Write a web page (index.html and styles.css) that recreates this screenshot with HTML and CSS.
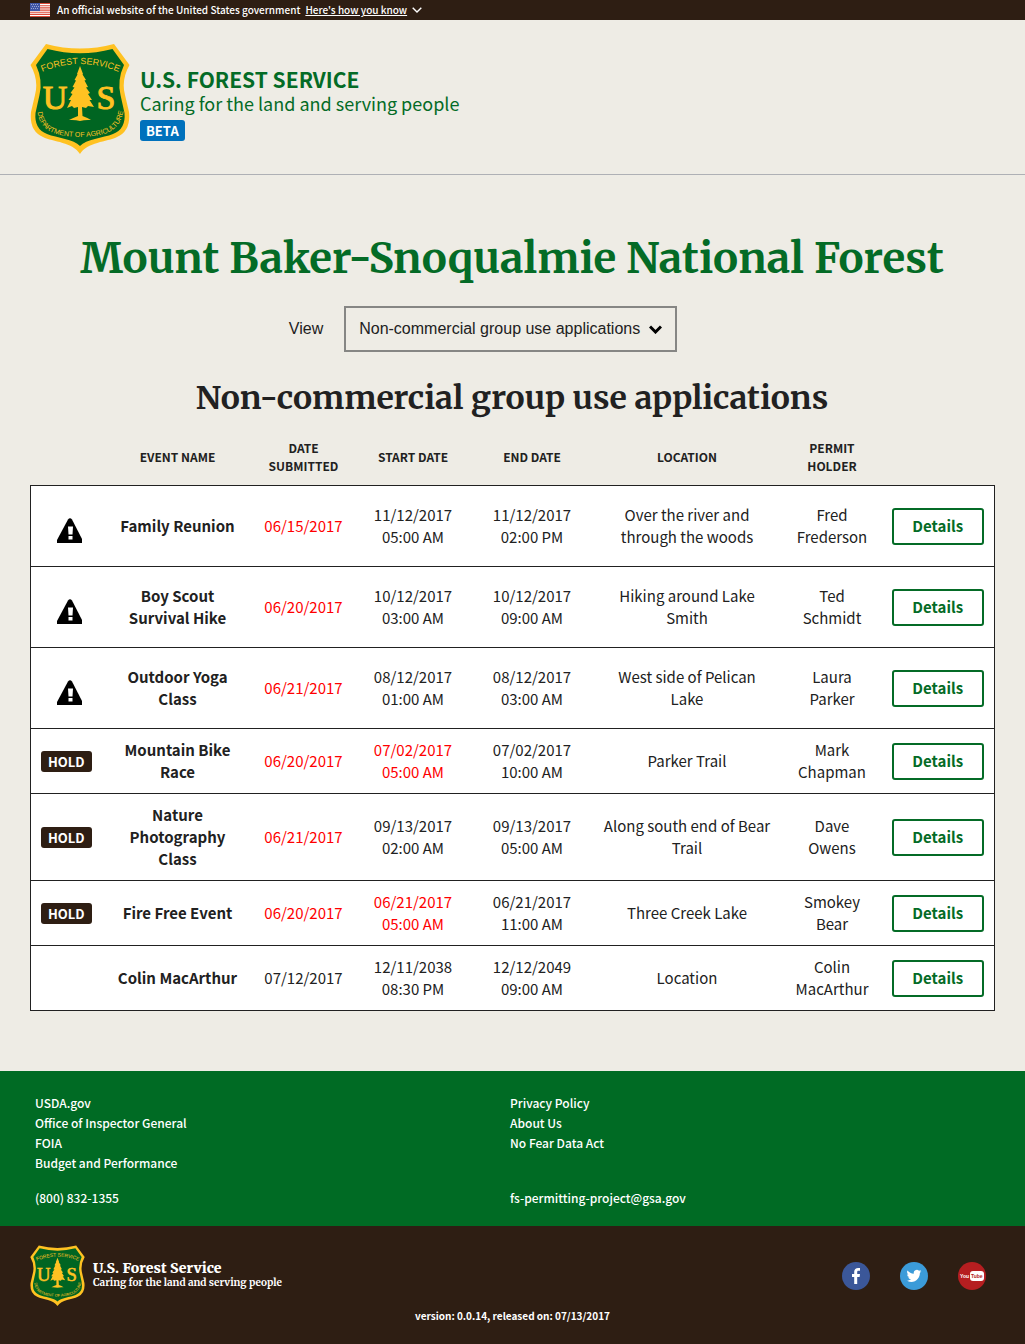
FILE: index.html
```html
<!DOCTYPE html>
<html lang="en">
<head>
<meta charset="utf-8">
<meta name="viewport" content="width=device-width, initial-scale=1">
<title>Mount Baker-Snoqualmie National Forest</title>
<link rel="stylesheet" href="styles.css">
</head>
<body>
<svg class="sprite" aria-hidden="true">
  <defs>
    <path id="arc-top" d="M12 29 Q50 13 89 29"/>
    <path id="arc-bottom" d="M7 65 C9 89 24 93 50 94 C76 93 91 89 94 64"/>
  </defs>
  <symbol id="shield" viewBox="0 0 100 111">
    <path fill="#ffc222" d="M16 1 Q50 10 84 1 L99.500 22 Q91 37 95 52 L99 69 Q101 88 87 94 C77 99 57 99 50 111 C43 99 23 99 13 94 Q-1 88 1 69 L5 52 Q9 37 0.500 22Z"/>
    <path fill="#006522" d="M17.500 6 Q50 14.500 82.500 6 L94 22 Q87 37 90.500 52 L94.500 70 Q96 86 83 91 C73 95 56 96 50 103 C44 96 27 95 17 91 Q4 86 5.500 70 L9.500 52 Q13 37 6 22Z"/>
    <g fill="#ffc222">
      <path d="M50 23 L53 31 L52.500 31.500 L56 37 L54.500 37.500 L58 44 L56 44.500 L60 50 L58 51 L62 57 L59.500 57 L64 64 L58 63 L56 65 L52 64 L52.500 73 Q58 75 61 77 Q55 76.500 50 78 Q45 76.500 39 77 Q43 75 48 73 L48 64 L44 65 L42 63 L37 65 L41 57 L38.500 57 L42.500 51 L40.500 50 L44.500 44.500 L42.500 44 L46 37.500 L44.500 37 L47.500 31.500 L47 31Z"/>
      <text class="seal-letter" x="25" y="66" text-anchor="middle">U</text>
      <text class="seal-letter" x="76" y="66" text-anchor="middle">S</text>
      <text class="seal-text"><textPath href="#arc-top" startOffset="50%" text-anchor="middle">FOREST SERVICE</textPath></text>
      <text class="seal-text seal-text-low"><textPath href="#arc-bottom" startOffset="50%" text-anchor="middle">DEPARTMENT OF AGRICULTURE</textPath></text>
    </g>
  </symbol>
  <symbol id="warning" viewBox="0 0 25 25">
    <path d="M11 1.500 Q13 -1 15 1.500 L25 21 V25 H0 V22Z"/>
    <path fill="#fff" d="M11 8.500 H16 L15.500 16.500 H11.500Z M11.500 18 h4 v3.500 h-4z"/>
  </symbol>
</svg>

<div class="banner">
  <svg class="flag" viewBox="0 0 20 14" aria-hidden="true">
    <path fill="#fff" d="M0 0h20v14H0z"/>
    <path stroke="#dc4a38" stroke-width="1.100" d="M0 .5h20M0 2.700h20M0 4.900h20M0 7.100h20M0 9.300h20M0 11.400h20M0 13.500h20"/>
    <path fill="#3f55a5" d="M0 0h10v8H0z"/>
    <path stroke="#9aa6d3" stroke-dasharray="1 1" d="M1 1.500h8M2 3.500h7M1 5.500h8"/>
  </svg>
  <span>An official website of the United States government</span>
  <button class="banner-toggle" type="button"><span class="underlined">Here's how you know</span>
    <svg class="banner-chevron" viewBox="0 0 10 6" aria-hidden="true"><path fill="none" stroke="#fff" stroke-width="1.400" d="M.7.700 5 5 9.300.700"/></svg>
  </button>
</div>

<header class="header">
  <svg class="logo" role="img" aria-label="Forest Service shield"><use href="#shield"/></svg>
  <div class="brand">
    <strong class="brand-name">U.S. FOREST SERVICE</strong>
    <span class="brand-tagline">Caring for the land and serving people</span>
    <span class="beta">BETA</span>
  </div>
</header>

<main class="main">
  <h1 class="title">Mount Baker-Snoqualmie National Forest</h1>
  <form class="filter">
    <label for="view">View</label>
    <div class="select-wrap">
      <select id="view" class="select"><option>Non-commercial group use applications</option></select>
      <svg class="select-chevron" viewBox="0 0 13 9" aria-hidden="true"><path fill="none" stroke="#000" stroke-width="3" d="M1 1.500 6.500 7 12 1.500"/></svg>
    </div>
  </form>
  <h2 class="subtitle">Non-commercial group use applications</h2>

  <table class="applications">
    <colgroup><col class="c-status"><col class="c-event"><col class="c-submitted"><col class="c-start"><col class="c-end"><col class="c-location"><col class="c-holder"><col class="c-action"></colgroup>
    <thead>
      <tr><td></td><th scope="col">EVENT NAME</th><th scope="col">DATE SUBMITTED</th><th scope="col">START DATE</th><th scope="col">END DATE</th><th scope="col">LOCATION</th><th scope="col">PERMIT HOLDER</th><td></td></tr>
    </thead>
    <tbody>
      <tr><td><svg class="warning" role="img" aria-label="Needs attention"><use href="#warning"/></svg></td><th scope="row">Family Reunion</th><td class="late">06/15/2017</td><td>11/12/2017<br>05:00 AM</td><td>11/12/2017<br>02:00 PM</td><td>Over the river and through the woods</td><td>Fred Frederson</td><td><button class="details" type="button">Details</button></td></tr>
      <tr><td><svg class="warning" role="img" aria-label="Needs attention"><use href="#warning"/></svg></td><th scope="row">Boy Scout Survival Hike</th><td class="late">06/20/2017</td><td>10/12/2017<br>03:00 AM</td><td>10/12/2017<br>09:00 AM</td><td>Hiking around Lake Smith</td><td>Ted Schmidt</td><td><button class="details" type="button">Details</button></td></tr>
      <tr><td><svg class="warning" role="img" aria-label="Needs attention"><use href="#warning"/></svg></td><th scope="row">Outdoor Yoga Class</th><td class="late">06/21/2017</td><td>08/12/2017<br>01:00 AM</td><td>08/12/2017<br>03:00 AM</td><td>West side of Pelican Lake</td><td>Laura Parker</td><td><button class="details" type="button">Details</button></td></tr>
      <tr><td><span class="hold">HOLD</span></td><th scope="row">Mountain Bike Race</th><td class="late">06/20/2017</td><td class="late">07/02/2017<br>05:00 AM</td><td>07/02/2017<br>10:00 AM</td><td>Parker Trail</td><td>Mark Chapman</td><td><button class="details" type="button">Details</button></td></tr>
      <tr><td><span class="hold">HOLD</span></td><th scope="row">Nature Photography Class</th><td class="late">06/21/2017</td><td>09/13/2017<br>02:00 AM</td><td>09/13/2017<br>05:00 AM</td><td>Along south end of Bear Trail</td><td>Dave Owens</td><td><button class="details" type="button">Details</button></td></tr>
      <tr><td><span class="hold">HOLD</span></td><th scope="row">Fire Free Event</th><td class="late">06/20/2017</td><td class="late">06/21/2017<br>05:00 AM</td><td>06/21/2017<br>11:00 AM</td><td>Three Creek Lake</td><td>Smokey Bear</td><td><button class="details" type="button">Details</button></td></tr>
      <tr><td></td><th scope="row">Colin MacArthur</th><td>07/12/2017</td><td>12/11/2038<br>08:30 PM</td><td>12/12/2049<br>09:00 AM</td><td>Location</td><td>Colin MacArthur</td><td><button class="details" type="button">Details</button></td></tr>
    </tbody>
  </table>
</main>

<footer class="footer">
  <nav class="footer-links">
    <div class="footer-column">
      <ul>
        <li><a href="#">USDA.gov</a></li>
        <li><a href="#">Office of Inspector General</a></li>
        <li><a href="#">FOIA</a></li>
        <li><a href="#">Budget and Performance</a></li>
      </ul>
      <a href="tel:8008321355">(800) 832-1355</a>
    </div>
    <div class="footer-column">
      <ul>
        <li><a href="#">Privacy Policy</a></li>
        <li><a href="#">About Us</a></li>
        <li><a href="#">No Fear Data Act</a></li>
      </ul>
      <a href="mailto:fs-permitting-project@gsa.gov">fs-permitting-project@gsa.gov</a>
    </div>
  </nav>
  <div class="footer-base">
    <div class="footer-row">
      <svg class="footer-logo" role="img" aria-label="Forest Service shield"><use href="#shield"/></svg>
      <div class="footer-brand">
        <strong class="footer-name">U.S. Forest Service</strong>
        <span class="footer-tagline">Caring for the land and serving people</span>
      </div>
      <div class="social">
        <a href="#" aria-label="Facebook"><svg viewBox="0 0 28 28"><circle cx="14" cy="14" r="14" fill="#3b5799"/><path fill="#fff" d="M12.200 22V15H10v-3h2.200V10c0-2.800 1.600-4 4-4h1.800v2.800h-1.500c-.9 0-1.300.5-1.300 1.300V12H18l-.4 3h-2.400v7z"/></svg></a>
        <a href="#" aria-label="Twitter"><svg viewBox="0 0 28 28"><circle cx="14" cy="14" r="14" fill="#3b9bd9"/><path fill="#fff" transform="translate(6.500 6.500) scale(.620)" d="M23.950 4.570a10 10 0 0 1-2.820.770 4.960 4.960 0 0 0 2.160-2.720c-.950.550-2 .960-3.130 1.180a4.920 4.920 0 0 0-8.380 4.480C7.690 8.090 4.070 6.130 1.640 3.160a4.820 4.820 0 0 0-.670 2.480c0 1.710.870 3.210 2.190 4.100a4.900 4.900 0 0 1-2.230-.620v.060a4.920 4.920 0 0 0 3.950 4.830 5 5 0 0 1-2.210.080 4.940 4.940 0 0 0 4.600 3.420A9.870 9.870 0 0 1 0 19.540a13.990 13.990 0 0 0 7.560 2.210c9.050 0 14-7.500 14-13.980v-.640a9.940 9.940 0 0 0 2.390-2.560z"/></svg></a>
        <a href="#" aria-label="YouTube"><svg viewBox="0 0 28 28"><circle cx="14" cy="14" r="14" fill="#b51e20"/><rect x="12" y="9" width="14" height="10" rx="3" fill="#fff"/><text class="tube" x="2" y="16" fill="#fff">You</text><text class="tube" x="13" y="16" fill="#b51e20">Tube</text></svg></a>
      </div>
    </div>
    <p class="version">version: 0.0.14, released on: 07/13/2017</p>
  </div>
</footer>
</body>
</html>
```
FILE: styles.css
```css
* { box-sizing: border-box; }

body {
  margin: 0;
  min-height: 100vh;
  display: flex;
  flex-direction: column;
  background: #eeece5;
  color: #212121;
  font: 15px/22px "Noto Sans CJK JP", "Noto Sans", sans-serif;
}

a { color: inherit; text-decoration: none; }
button { font: inherit; cursor: pointer; }
.sprite { position: absolute; width: 0; height: 0; }

.seal-letter { font: 34px "Liberation Serif", serif; stroke: #ffc222; stroke-width: 1px; }
.seal-text { font: 9px "Liberation Sans Narrow", "Liberation Sans", sans-serif; }
.seal-text-low { font-size: 7px; }

.banner {
  display: flex;
  align-items: center;
  height: 20px;
  padding: 0 30px;
  background: #2e1e13;
  color: #fff;
  font-size: 10px;
  font-weight: 500;
  line-height: 20px;
}
.flag { width: 20px; height: 14px; margin-right: 7px; }
.banner-toggle {
  display: flex;
  align-items: center;
  gap: 5px;
  margin-left: 5px;
  padding: 0;
  border: 0;
  background: none;
  color: inherit;
}
.underlined { text-decoration: underline; }
.banner-chevron { width: 10px; height: 6px; }

.header {
  display: flex;
  gap: 10px;
  padding: 23px 30px 20px;
  border-bottom: 1px solid #aeb0b5;
  color: #046b26;
}
.logo { width: 100px; height: 111px; }
.brand { display: flex; flex-direction: column; align-items: flex-start; padding-top: 24px; }
.brand-name { font-size: 21px; line-height: 24px; }
.brand-tagline { font-size: 18px; line-height: 24px; }
.beta {
  margin-top: 5px;
  padding: 0 6px;
  border-radius: 3px;
  background: #0071bc;
  color: #fff;
  font-size: 13px;
  font-weight: bold;
  line-height: 21px;
}

.main { flex: 1; padding: 53px 31px 60px 30px; }
.title, .subtitle {
  margin: 0;
  font-family: Merriweather, "DejaVu Serif Condensed", "DejaVu Serif", serif;
  font-weight: bold;
  text-align: center;
}
.title { color: #046b26; font-size: 42px; line-height: 60px; }
.subtitle { margin-top: 26px; font-size: 32px; line-height: 40px; }

.filter {
  display: flex;
  justify-content: center;
  align-items: center;
  gap: 21px;
  margin-top: 18px;
  padding-right: 58px;
  font: 16px/20px "Liberation Sans", Arial, sans-serif;
}
.select-wrap { position: relative; }
.select {
  width: 333px;
  height: 46px;
  padding: 0 30px 0 13px;
  border: 2px solid #868684;
  border-radius: 0;
  background: none;
  color: inherit;
  font: inherit;
  appearance: none;
}
.select-chevron { position: absolute; top: 19px; right: 15px; width: 13px; height: 9px; pointer-events: none; }

.applications {
  width: 100%;
  margin-top: 11px;
  table-layout: fixed;
  border-collapse: collapse;
  text-align: center;
}
.c-status { width: 71px; }
.c-event { width: 152px; }
.c-submitted { width: 100px; }
.c-start, .c-end { width: 119px; }
.c-location { width: 191px; }
.c-holder { width: 99px; }
.c-action { width: 113px; }
.applications th, .applications td { padding: 10px; }
.applications thead th { font-size: 12px; line-height: 18px; }
.applications tbody { border: 1px solid #212121; background: #fff; }
.applications tbody tr { border-top: 1px solid #212121; }
.applications .late { color: #f00; }
.warning { display: block; width: 25px; height: 25px; margin: 22px auto 13px 16px; }
.hold {
  display: block;
  border-radius: 3px;
  background: #2e1e13;
  color: #fff;
  font-size: 13px;
  font-weight: bold;
  line-height: 21px;
}
.details {
  display: block;
  width: 100%;
  height: 37px;
  padding: 0;
  border: 2px solid #046b26;
  border-radius: 3px;
  background: #fff;
  color: #046b26;
  font-weight: bold;
}

.footer { color: #fff; font-size: 12px; font-weight: 500; line-height: 20px; }
.footer-links {
  display: grid;
  grid-template-columns: 1fr 1fr;
  padding: 22px 40px 18px 35px;
  background: #006b24;
}
.footer-column { display: flex; flex-direction: column; justify-content: space-between; align-items: flex-start; gap: 15px; }
.footer-column ul { margin: 0; padding: 0; list-style: none; }
.footer-base { padding: 19px 30px; background: #2e1e13; }
.footer-row { display: flex; align-items: center; gap: 8px; }
.footer-logo { width: 55px; height: 61px; }
.footer-brand {
  display: flex;
  flex-direction: column;
  font-family: Merriweather, "DejaVu Serif Condensed", "DejaVu Serif", serif;
  font-weight: bold;
}
.footer-name { font-size: 14px; line-height: 15px; }
.footer-tagline { font-size: 10px; line-height: 14px; }
.social { display: flex; gap: 30px; margin-left: auto; padding-right: 9px; }
.social a, .social svg { display: block; width: 28px; height: 28px; }
.tube { font: bold 5px "Liberation Sans Narrow", "Liberation Sans", sans-serif; }
.version { margin: 0; font-size: 10px; font-weight: bold; line-height: 19px; text-align: center; }
```
